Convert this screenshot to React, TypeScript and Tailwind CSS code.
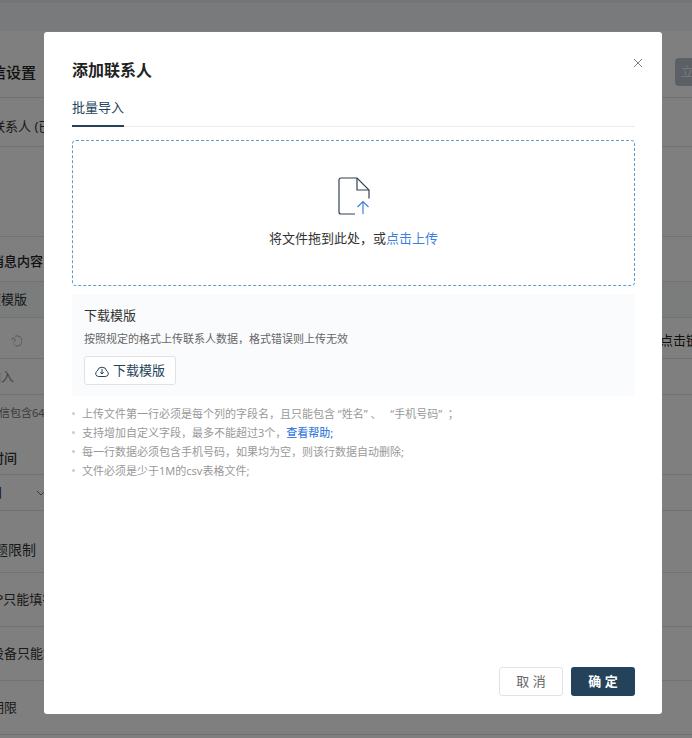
import { useState } from 'react'
import type { ReactNode } from 'react'

function Row({ className, children }: { className: string; children?: ReactNode }) {
  return (
    <div className={`flex items-center border-b border-[#e2e4e6] ${className}`}>
      {children}
    </div>
  )
}

function SettingsPage() {
  return (
    <div className="h-screen overflow-hidden bg-white whitespace-nowrap text-[13px] text-[#333]">
      <div className="h-[3px] bg-[#e6e9ee]" />
      <div className="h-7 bg-[#f1f4f9]" />

      <div className="-mr-12 -ml-6">
        <Row className="h-[67px] justify-between pt-4">
          <h1 className="text-[15px] font-medium text-[#222]">短信设置</h1>
          <button type="button" className="h-7 w-[65px] rounded bg-[#b4c1cc] pl-1.5 text-left text-[#e8edf2]">
            立即
          </button>
        </Row>

        <Row className="h-[49px] pl-4 pt-2.5">联系人 (已添加)</Row>
        <Row className="h-[90px]" />
        <Row className="h-[45px] pl-[15px] pt-1.5 font-medium text-[#222]">消息内容</Row>
        <Row className="h-9 bg-[#f6fafa] pl-3">度模版</Row>

        <Row className="h-[41px] justify-between pl-[34px] pt-1.5">
          <svg viewBox="0 0 14 14" className="size-3" fill="none" stroke="#999" aria-hidden="true">
            <path d="M6 1.400a6 6 0 1 1 0 11.200M2 5.500a2 2 0 1 1 3.500 1.400c-.6.5-1 .8-1 1.600M4.500 10v1" />
          </svg>
          <p className="pr-0.5 text-[#222]">点击链接参与</p>
        </Row>

        <Row className="h-9 pl-3 text-[#888]">输入</Row>
        <Row className="h-20 flex-wrap content-between pl-3 pt-2 pb-1">
          <p className="w-full text-[11px] leading-5 text-[#777]">短信包含64个字</p>
          <p className="pl-[3px] font-medium leading-6">时间</p>
        </Row>
        <Row className="h-9 pl-3.5">
          <span>日</span>
          <svg viewBox="0 0 12 12" className="ml-8 size-3" fill="none" stroke="#777" aria-hidden="true">
            <path d="m2 4 4 4 4-4" />
          </svg>
        </Row>
        <Row className="h-[62px] pl-1 pt-4">
          <h2 className="text-sm text-[#333]">答题限制</h2>
        </Row>
        <Row className="h-[54px] pl-[15px]">IP只能填答一次</Row>
        <Row className="h-[54px] pl-[15px]">设备只能填答</Row>
        <Row className="h-[54px] pl-[15px]">期限</Row>
      </div>
    </div>
  )
}

function FileIcon() {
  return (
    <svg viewBox="0 0 32 38" className="h-[38px] w-8" fill="none" strokeWidth="1.2" aria-hidden="true">
      <path d="M31 21.500V13L19 1H3a2 2 0 0 0-2 2v32a2 2 0 0 0 2 2h14" stroke="#334155" />
      <path d="M19 1v12h12" stroke="#334155" />
      <path d="M25 37V24.500M19.500 30 25 24.500 30.500 30" stroke="#3f7fe0" />
    </svg>
  )
}

function CloudDownloadIcon() {
  return (
    <svg viewBox="0 0 14 14" className="size-[14px]" fill="none" stroke="#24435a" aria-hidden="true">
      <path d="M3.500 12.500h7a2.900 2.900 0 0 0 1.200-5.500 4.800 4.800 0 0 0-9.400 0 2.900 2.900 0 0 0 1.200 5.500Z" />
      <path d="M7 5v5M5.300 8.300 7 10l1.700-1.700" />
    </svg>
  )
}

function AddContactsDialog({ onClose }: { onClose: () => void }) {
  return (
    <div className="fixed inset-0 flex bg-black/50 pt-8 pr-[30px] pb-6 pl-11">
      <div
        role="dialog"
        aria-modal="true"
        aria-labelledby="dialog-title"
        className="flex flex-1 flex-col rounded-[3px] bg-white pr-[27px] pb-[18px] pl-7"
      >
        <div className="flex items-start justify-between pt-[26px]">
          <h2 id="dialog-title" className="text-base leading-6 font-bold text-[#222]">
            添加联系人
          </h2>
          <button type="button" aria-label="关闭" onClick={onClose} className="-mr-2.5 -mt-0.5 flex size-[14px] items-center justify-center">
            <svg viewBox="0 0 10 10" className="size-[10px]" fill="none" stroke="#808080" aria-hidden="true">
              <path d="m1 1 8 8M9 1 1 9" />
            </svg>
          </button>
        </div>

        <div role="tablist" className="mt-3 flex border-b border-[#ececec]">
          <button
            type="button"
            role="tab"
            aria-selected="true"
            className="-mb-px h-[33px] border-b-2 border-[#24435a] pt-0.5 pb-2 text-[13px] leading-5 text-[#24435a]"
          >
            批量导入
          </button>
        </div>

        <div className="mt-[13px] flex h-[146px] flex-col items-center rounded border border-dashed border-[#5b9fd0] pt-9">
          <FileIcon />
          <p className="mt-[13px] text-[13px] leading-5 text-[#333]">
            将文件拖到此处，或
            <label className="cursor-pointer text-[#3f7fe0]">
              点击上传
              <input type="file" accept=".csv" className="sr-only" />
            </label>
          </p>
        </div>

        <section className="mt-2 bg-[#fafbfd] px-3 pt-[11px] pb-[11px]">
          <h3 className="text-[13px] leading-5 text-[#333]">下载模版</h3>
          <p className="mt-1.5 text-[11px] leading-4 text-[#666]">
            按照规定的格式上传联系人数据，格式错误则上传无效
          </p>
          <button
            type="button"
            className="mt-[9px] flex h-[29px] items-center gap-1 rounded-[3px] border border-[#dfe2e6] bg-white px-2.5 text-[13px] text-[#24435a]"
          >
            <CloudDownloadIcon />
            下载模版
          </button>
        </section>

        <ul className="mt-2 list-none text-[11px] leading-[19px] text-[#999]">
          <Tip>上传文件第一行必须是每个列的字段名，且只能包含 “姓名” 、&nbsp;&nbsp; “手机号码”&nbsp; ；</Tip>
          <Tip>
            支持增加自定义字段，最多不能超过3个，
            <a href="#help" className="font-medium text-[#3f7fe0]">查看帮助;</a>
          </Tip>
          <Tip>每一行数据必须包含手机号码，如果均为空，则该行数据自动删除;</Tip>
          <Tip>文件必须是少于1M的csv表格文件;</Tip>
        </ul>

        <div className="mt-auto flex justify-end gap-2 text-[13px]">
          <button type="button" onClick={onClose} className="h-[29px] w-16 rounded-[3px] border border-[#dfe2e6] bg-white text-[#666]">
            取 消
          </button>
          <button type="button" onClick={onClose} className="h-[29px] w-16 rounded-[3px] bg-[#24435a] font-bold text-white">
            确 定
          </button>
        </div>
      </div>
    </div>
  )
}

function Tip({ children }: { children: ReactNode }) {
  return (
    <li className="flex items-center gap-[7px]">
      <span className="size-[3px] shrink-0 rounded-full bg-[#ccc]" />
      <p>{children}</p>
    </li>
  )
}

export default function App() {
  const [open, setOpen] = useState(true)

  return (
    <div className="font-['Noto_Sans','Noto_Sans_CJK_SC',sans-serif]">
      <SettingsPage />
      {open && <AddContactsDialog onClose={() => setOpen(false)} />}
    </div>
  )
}
